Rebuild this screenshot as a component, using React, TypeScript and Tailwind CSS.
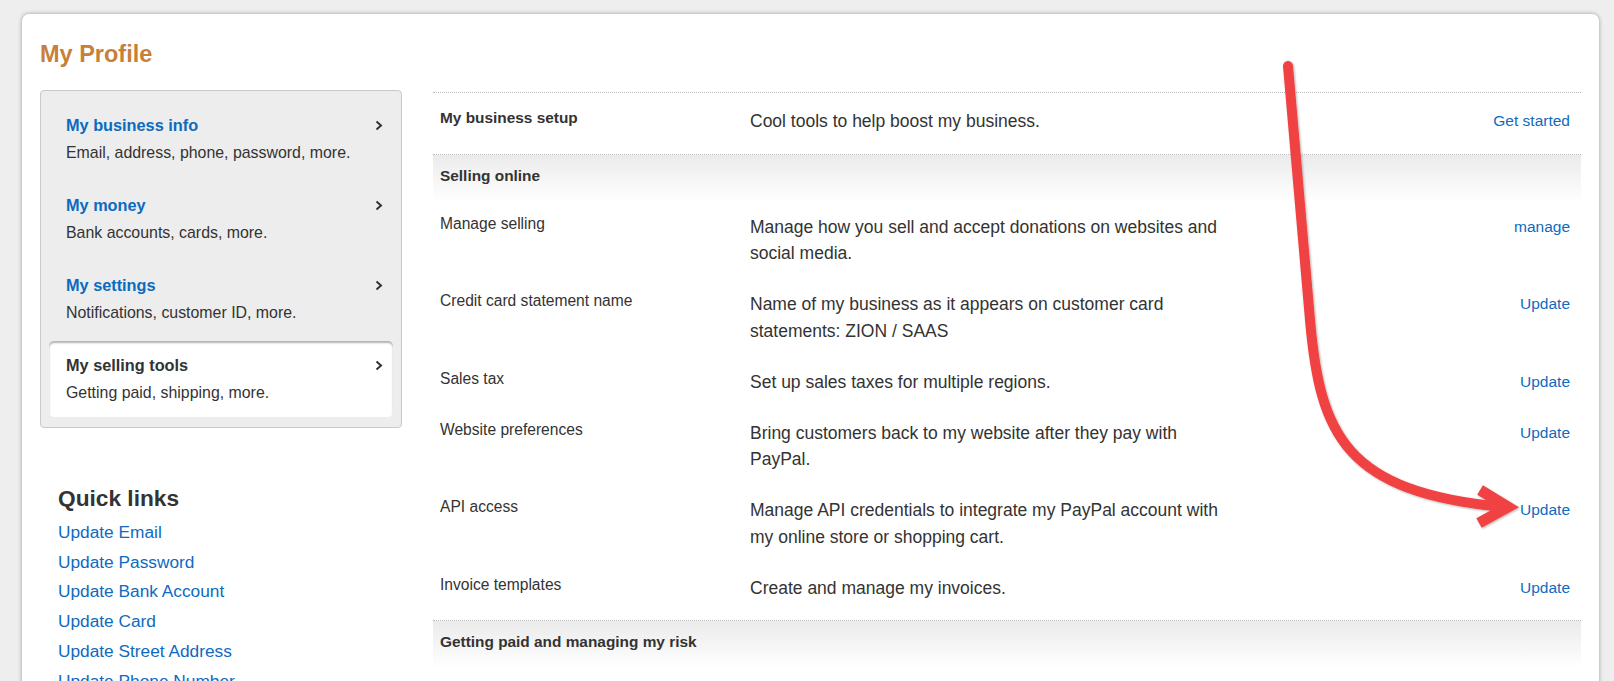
import React from "react";

const font = "font-['Liberation_Sans',Arial,sans-serif]";

interface NavItem {
  title: string;
  sub: string;
  active?: boolean;
}

const navItems: NavItem[] = [
  { title: "My business info", sub: "Email, address, phone, password, more." },
  { title: "My money", sub: "Bank accounts, cards, more." },
  { title: "My settings", sub: "Notifications, customer ID, more." },
  { title: "My selling tools", sub: "Getting paid, shipping, more.", active: true },
];

const quickLinks = [
  "Update Email",
  "Update Password",
  "Update Bank Account",
  "Update Card",
  "Update Street Address",
  "Update Phone Number",
  "Update Notifications",
];

interface Row {
  label: string;
  desc: string;
  link: string;
}

const sellingRows: Row[] = [
  { label: "Manage selling", desc: "Manage how you sell and accept donations on websites and social media.", link: "manage" },
  { label: "Credit card statement name", desc: "Name of my business as it appears on customer card statements: ZION / SAAS", link: "Update" },
  { label: "Sales tax", desc: "Set up sales taxes for multiple regions.", link: "Update" },
  { label: "Website preferences", desc: "Bring customers back to my website after they pay with PayPal.", link: "Update" },
  { label: "API access", desc: "Manage API credentials to integrate my PayPal account with my online store or shopping cart.", link: "Update" },
  { label: "Invoice templates", desc: "Create and manage my invoices.", link: "Update" },
];

function Chevron() {
  return (
    <svg width="8" height="11" viewBox="0 0 8 11" className="shrink-0">
      <path d="M1.5 1.5 L6 5.5 L1.5 9.5" fill="none" stroke="#333" strokeWidth="2" />
    </svg>
  );
}

function SideNav() {
  return (
    <div className="border border-[#c9c9c9] rounded-[4px] bg-[#ededed] px-[8px] py-[10px] flex flex-col gap-[4px]">
      {navItems.map((item) => (
        <div
          key={item.title}
          className={`h-[76px] pl-[17px] pr-[10px] pt-[14px] rounded-[5px] ${
            item.active ? "bg-white shadow-[inset_0_2px_2px_rgba(0,0,0,0.3)]" : ""
          }`}
        >
          <div className="flex items-center justify-between h-[20px]">
            <span
              className={`text-[16.3px] leading-[20px] font-bold ${
                item.active ? "text-[#333]" : "text-[#0b6bc0]"
              }`}
            >
              {item.title}
            </span>
            <Chevron />
          </div>
          <div className="mt-[7px] text-[15.9px] leading-[22px] text-[#333]">{item.sub}</div>
        </div>
      ))}
    </div>
  );
}

function SectionHeader({ title }: { title: string }) {
  return (
    <div className="bg-gradient-to-b from-[#ebebeb] to-white pt-[9px] pb-[14px] pl-[7px]">
      <span className="text-[15.4px] leading-[20px] font-bold text-[#333]">{title}</span>
    </div>
  );
}

function SettingRow({ row, bold }: { row: Row; bold?: boolean }) {
  return (
    <div className="flex items-start">
      <div
        className={`w-[317px] shrink-0 pl-[7px] leading-[20px] text-[#333] ${
          bold ? "text-[15.4px] font-bold" : "text-[15.6px]"
        }`}
      >
        {row.label}
      </div>
      <div className="w-[485px] shrink-0 text-[17.5px] leading-[26.5px] text-[#333]">{row.desc}</div>
      <div className="flex-1 text-right pr-[11px] text-[15.5px] leading-[26.5px]">
        <a className="text-[#0f6ac0] cursor-pointer">{row.link}</a>
      </div>
    </div>
  );
}

function Arrow() {
  return (
    <svg
      className="absolute inset-0 pointer-events-none"
      width="1614"
      height="681"
      viewBox="0 0 1614 681"
    >
      <defs>
        <filter id="arrowShadow" x="-10%" y="-10%" width="120%" height="120%">
          <feDropShadow dx="1" dy="1" stdDeviation="1.2" floodColor="#000" floodOpacity="0.3" />
        </filter>
      </defs>
      <g filter="url(#arrowShadow)" fill="none" stroke="#f04343">
        <path
          d="M1288 66 L1310 320 C1320 435 1345 492 1503 507"
          strokeWidth="10"
          strokeLinecap="round"
        />
        <polyline
          points="1480,490 1508,507 1479,523"
          strokeWidth="11"
          strokeLinejoin="miter"
          strokeLinecap="butt"
          strokeMiterlimit="4"
        />
      </g>
    </svg>
  );
}

export default function App() {
  return (
    <div className={`relative h-[681px] overflow-hidden bg-[#eeeeee] ${font} text-[#333]`}>
      <div className="ml-[22px] mt-[14px] w-[1577px] bg-white rounded-[7px] shadow-[0_0_4px_rgba(0,0,0,0.35)] px-[18px] pt-[26px] pb-10">
        <h1 className="text-[23.5px] leading-[28px] font-bold text-[#c87f3a]">My Profile</h1>

        <div className="mt-[22px] flex items-start gap-[31px]">
          {/* Left column */}
          <div className="w-[362px] shrink-0">
            <SideNav />

            <div className="mt-[56px] pl-[18px]">
              <h2 className="text-[22.7px] leading-[28px] font-bold text-[#333]">Quick links</h2>
              <div className="mt-[6px] flex flex-col">
                {quickLinks.map((l) => (
                  <a key={l} className="text-[17.3px] leading-[29.7px] text-[#0f6ac0] cursor-pointer">
                    {l}
                  </a>
                ))}
              </div>
            </div>
          </div>

          {/* Right column */}
          <div className="flex-1 mt-[2px]">
            <div className="border-t border-dotted border-[#bbb] pt-[15px] pb-[19px]">
              <SettingRow
                bold
                row={{ label: "My business setup", desc: "Cool tools to help boost my business.", link: "Get started" }}
              />
            </div>

            <div className="border-t border-dotted border-[#bbb] pb-[6px]">
              <SectionHeader title="Selling online" />
              {sellingRows.map((row) => (
                <div key={row.label} className="pt-[12px] pb-[12.5px]">
                  <SettingRow row={row} />
                </div>
              ))}
            </div>

            <div className="border-t border-dotted border-[#bbb]">
              <SectionHeader title="Getting paid and managing my risk" />
            </div>
          </div>
        </div>
      </div>

      <Arrow />
    </div>
  );
}
